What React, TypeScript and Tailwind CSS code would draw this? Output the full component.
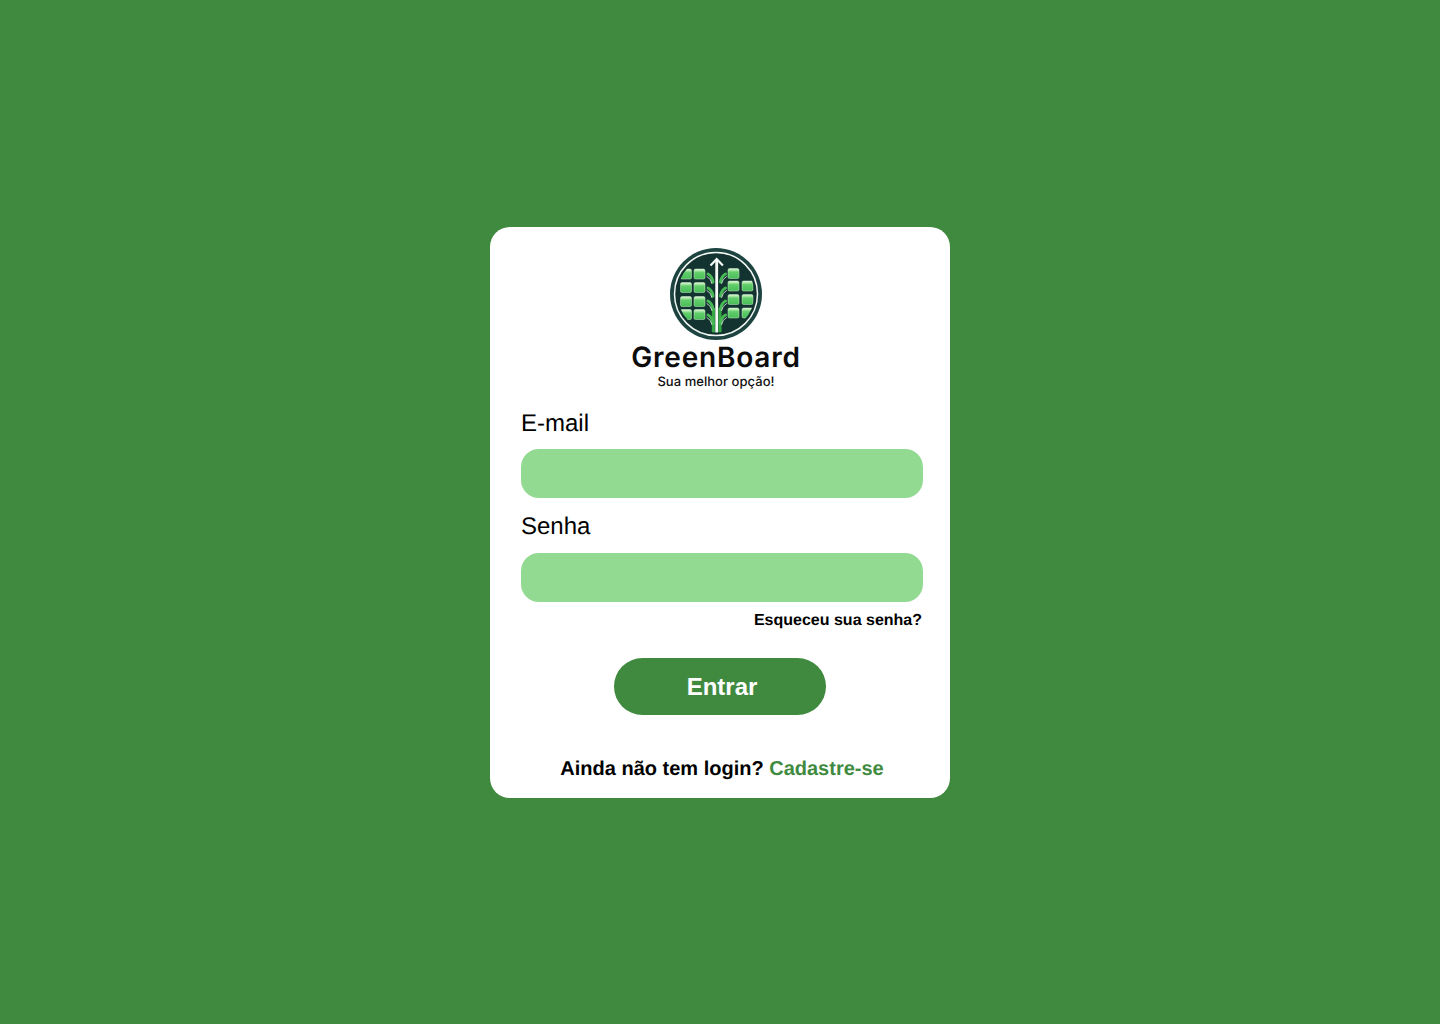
import React from 'react';

const leftCells = [
    [10.5, 21], [24, 21],
    [10.5, 34.5], [24, 34.5],
    [10.5, 48.5], [24, 48.5],
    [10.5, 61.5], [24, 61.5],
];

const rightCells = [
    [58, 20.5],
    [58, 33], [72, 33],
    [58, 46.5], [72, 46.5],
    [58, 60], [72, 60],
];

function Logo() {
    const cells = [...leftCells, ...rightCells];
    return (
        <svg viewBox="0 0 92 92" className="w-[92px] h-[92px] block">
            <defs>
                <clipPath id="inner">
                    <circle cx="46" cy="46" r="38.5" />
                </clipPath>
                <linearGradient id="cell" x1="0" y1="0" x2="0" y2="1">
                    <stop offset="0" stopColor="#e6f8e3" />
                    <stop offset="0.18" stopColor="#a8e6a4" />
                    <stop offset="0.36" stopColor="#62ce6b" />
                    <stop offset="1" stopColor="#48bd58" />
                </linearGradient>
            </defs>
            <circle cx="46" cy="46" r="46" fill="#1d4440" />
            <circle cx="46" cy="46" r="41.5" fill="#12332f" stroke="#f2f7f4" strokeWidth="1.5" />
            <g clipPath="url(#inner)">
                {cells.map(([x, y]) => (
                    <rect key={`${x}-${y}`} x={x} y={y} width="11" height="10" rx="1.5" fill="url(#cell)" stroke="#c9eec6" strokeWidth="0.5" />
                ))}
                <path d="M41.8 86V60h3.2v26zM48.4 86V60h3.2v26z" fill="#35a845" />
                <g fill="none" strokeLinecap="round">
                    <path d="M38 26q4 2 5 8M38 40q4 2 5 8M38 53q4 2 5 8M38 67q4 2 5 8" stroke="#46b955" strokeWidth="3" />
                    <path d="M55.5 26q-4 2-5 8M55.5 40q-4 2-5 8M55.5 53q-4 2-5 8M55.5 67q-4 2-5 8" stroke="#46b955" strokeWidth="3" />
                    <path d="M37 28.5q4 2 5 7M37 42.5q4 2 5 7M37 55.5q4 2 5 7M37 69.5q4 2 5 7" stroke="#eef8ee" strokeWidth="0.8" />
                    <path d="M56.5 28.5q-4 2-5 7M56.5 42.5q-4 2-5 7M56.5 55.5q-4 2-5 7M56.5 69.5q-4 2-5 7" stroke="#eef8ee" strokeWidth="0.8" />
                </g>
                <path d="M46.7 12V88" stroke="#f5faf6" strokeWidth="2.8" />
            </g>
            <path d="M40.5 17.5L46.7 11l6.2 6.5" fill="none" stroke="#f5faf6" strokeWidth="2.2" />
        </svg>
    );
}

export default function App() {
    return (
        <div className="min-h-screen bg-[#408a40] flex items-center justify-center font-['Liberation_Sans',Arial,sans-serif] [text-rendering:geometricPrecision]">
            <div className="w-[460px] h-[571px] bg-white rounded-[20px] pt-[21px] pl-[31px] pr-[27px] flex flex-col">
                <div className="flex flex-col items-center mr-[8px] -ml-[4px]">
                    <Logo />
                    <div className="font-['Inter',sans-serif] font-semibold text-[28px] leading-[34px] tracking-[0.8px] text-[#0c0c0c]">GreenBoard</div>
                    <div className="font-['Inter',sans-serif] font-medium text-[13px] leading-[15px] tracking-[0.05px] mt-px text-[#111]">Sua melhor opção!</div>
                </div>

                <label className="text-2xl leading-7 text-black mt-[20px]">E-mail</label>
                <input type="email" className="w-[402px] h-[49px] mt-[11px] rounded-[18px] bg-[#92d992] outline-none" />

                <label className="text-2xl leading-7 text-black mt-[15px]">Senha</label>
                <input type="password" className="w-[402px] h-[49px] mt-[12px] rounded-[18px] bg-[#92d992] outline-none" />

                <a className="self-end mr-[1px] mt-[9px] text-base leading-[20px] font-bold text-black">Esqueceu sua senha?</a>

                <button className="self-center mr-[4px] mt-[27px] w-[212px] h-[57px] pl-1 pt-[2px] rounded-full bg-[#408a40] text-white text-2xl font-bold">Entrar</button>

                <p className="text-center mt-[41px] text-xl leading-[26px] font-bold text-black">
                    Ainda não tem login? <a className="text-[#408a40]">Cadastre-se</a>
                </p>
            </div>
        </div>
    );
}
